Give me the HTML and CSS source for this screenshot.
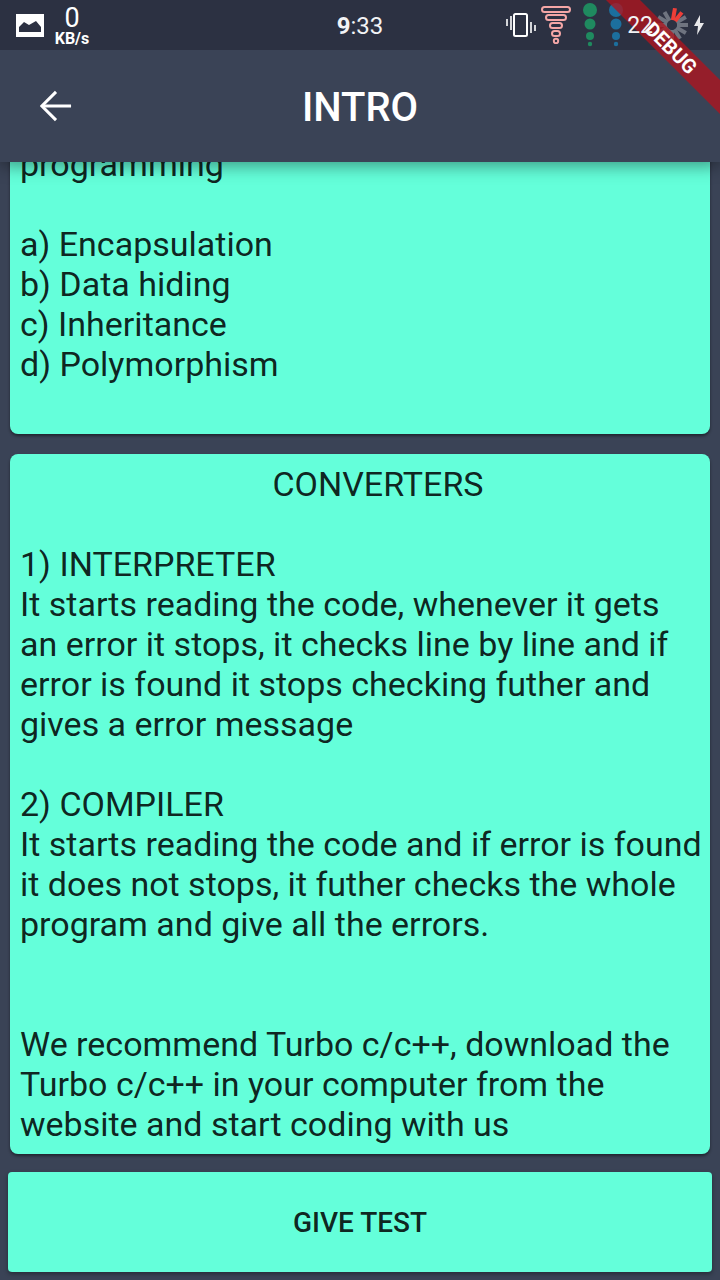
FILE: index.html
```html
<!DOCTYPE html>
<html lang="en">
<head>
    <meta charset="UTF-8">
    <title>Intro</title>
    <link rel="stylesheet" href="styles.css">
</head>
<body>
<div class="screen">
    <div class="status-bar">
        <div class="status-left">
            <svg class="icon-gallery" width="28" height="24" viewBox="0 0 28 24">
                <rect x="0" y="0" width="28" height="23" fill="#fff"/>
                <path d="M3 18 L3 13 L8 8 L13 11 L20 7 L25 13 L25 18 Z" fill="#2c3142"/>
            </svg>
            <div class="speed">
                <span class="speed-num">0</span>
                <span class="speed-unit">KB/s</span>
            </div>
        </div>
        <div class="status-time"><b class="time-hour">9</b>:33</div>
        <div class="status-right">
            <svg class="icon-vibrate" width="30" height="24" viewBox="0 0 30 24" fill="none" stroke="#fff">
                <rect x="8" y="1" width="13" height="22" rx="1.5" stroke-width="2"/>
                <path d="M1 6 V13 M5 3 V17 M25 9 V20 M29 12 V18" stroke-width="2" opacity="0.8"/>
            </svg>
            <svg class="icon-tornado" width="30" height="38" viewBox="0 0 30 38" fill="none" stroke="#f4a6a6" stroke-width="2">
                <rect x="1" y="1" width="28" height="5" rx="2.5"/>
                <rect x="5" y="9" width="20" height="5" rx="2.5"/>
                <rect x="9" y="17" width="12" height="5" rx="2.5"/>
                <rect x="11" y="25" width="8" height="5" rx="2.5"/>
                <circle cx="15" cy="35" r="2.2"/>
            </svg>
            <svg class="icon-dots-green" width="16" height="44" viewBox="0 0 16 44" fill="#1f8a5f">
                <circle cx="8" cy="7" r="7"/>
                <circle cx="8" cy="21" r="5.5"/>
                <circle cx="8" cy="33" r="4"/>
                <circle cx="8" cy="41" r="2.2"/>
            </svg>
            <svg class="icon-dots-blue" width="16" height="44" viewBox="0 0 16 44" fill="#1c6f9e">
                <circle cx="8" cy="7" r="7"/>
                <circle cx="8" cy="21" r="5.5"/>
                <circle cx="8" cy="33" r="4"/>
                <circle cx="8" cy="41" r="2.2"/>
            </svg>
            <span class="battery-num">22</span>
            <svg class="icon-battery" width="34" height="34" viewBox="0 0 34 34" stroke-width="4">
                <g stroke="#6f7480">
                    <path d="M17 12 V2" transform="rotate(-30 17 17)"/>
                    <path d="M17 12 V1" transform="rotate(-60 17 17)"/>
                    <path d="M17 12 V1" transform="rotate(-90 17 17)"/>
                    <path d="M17 12 V1" transform="rotate(-120 17 17)"/>
                    <path d="M17 12 V1" transform="rotate(-150 17 17)"/>
                    <path d="M17 12 V1" transform="rotate(180 17 17)"/>
                    <path d="M17 12 V1" transform="rotate(150 17 17)"/>
                    <path d="M17 12 V1" transform="rotate(120 17 17)"/>
                    <path d="M17 12 V1" transform="rotate(90 17 17)"/>
                    <path d="M17 12 V1" transform="rotate(60 17 17)"/>
                </g>
                <g stroke="#ee3e38">
                    <path d="M17 12 V0" transform="rotate(10 17 17)"/>
                    <path d="M17 12 V1" transform="rotate(38 17 17)"/>
                </g>
            </svg>
            <svg class="icon-bolt" width="10" height="20" viewBox="0 0 10 20">
                <path d="M6 0 L0 11 H4 L3 20 L10 8 H6 Z" fill="#e8e8ea"/>
            </svg>
        </div>
    </div>

    <div class="app-bar">
        <svg class="back-icon" width="32" height="32" viewBox="0 0 34 34" fill="none" stroke="#fff" stroke-width="3.2">
            <path d="M33 17 H3"/>
            <path d="M17 2 L2 17 L17 32"/>
        </svg>
        <h1 class="app-title">INTRO</h1>
    </div>

    <div class="list">
        <div class="card">
            <p class="card-text">programming

a) Encapsulation
b) Data hiding
c) Inheritance
d) Polymorphism
</p>
            <div class="blank-line"></div>
        </div>
        <div class="card">
            <p class="card-heading">CONVERTERS</p>
            <p class="card-text">
1) INTERPRETER
It starts reading the code, whenever it gets
an error it stops, it checks line by line and if
error is found it stops checking futher and
gives a error message

2) COMPILER
It starts reading the code and if error is found
it does not stops, it futher checks the whole
program and give all the errors.


We recommend Turbo c/c++, download the
Turbo c/c++ in your computer from the
website and start coding with us</p>
        </div>
    </div>

    <div class="test-row">
        <button type="button" class="test-btn">GIVE TEST</button>
    </div>

    <div class="debug-banner">DEBUG</div>
</div>
</body>
</html>
```

FILE: styles.css
```css
* {
    box-sizing: border-box;
}
html, body {
    margin: 0;
    padding: 0;
}
body {
    font-family: Roboto, "Liberation Sans", sans-serif;
    background-color: #3a4356;
}
.screen {
    position: relative;
    display: flex;
    flex-direction: column;
    width: 720px;
    height: 1280px;
    overflow: hidden;
    background-color: #3a4356;
}

/* status bar */
.status-bar {
    display: grid;
    grid-template-columns: 1fr auto 1fr;
    align-items: center;
    height: 50px;
    flex-shrink: 0;
    background-color: #2c3142;
    color: #fff;
}
.status-left {
    display: flex;
    align-items: center;
    gap: 9px;
    padding-left: 16px;
}
.icon-gallery {
    margin-top: 2px;
}
.speed {
    display: flex;
    flex-direction: column;
    align-items: center;
    width: 38px;
    margin-bottom: 1px;
}
.speed-num {
    font-size: 27px;
    line-height: 27px;
}
.speed-unit {
    font-size: 16px;
    line-height: 13px;
    font-weight: 700;
}
.status-time {
    margin-top: 2px;
    font-size: 24px;
    color: #f2f3f5;
}
.time-hour {
    font-weight: 700;
}
.status-right {
    display: flex;
    align-items: center;
    justify-content: flex-end;
    padding-right: 16px;
}
.icon-vibrate {
    margin-right: 5px;
}
.icon-tornado {
    margin-right: 11px;
}
.icon-dots-green {
    margin-right: 10px;
}
.icon-dots-blue {
    margin-right: 3px;
}
/* these two stay bright where the ribbon crosses them */
.battery-num, .icon-bolt {
    position: relative;
    z-index: 3;
}
.battery-num {
    font-size: 23px;
    color: #f2f3f5;
}
.icon-battery {
    margin-left: 2px;
}
.icon-bolt {
    margin-left: 5px;
}

/* app bar */
.app-bar {
    position: relative;
    z-index: 1;
    display: flex;
    align-items: center;
    justify-content: center;
    height: 112px;
    flex-shrink: 0;
    background-color: #3a4356;
    box-shadow: 0 4px 16px rgba(0, 0, 0, 0.4);
    clip-path: inset(0 0 -40px 0);
}
.back-icon {
    position: absolute;
    left: 40px;
    top: 40px;
}
.app-title {
    margin: 0;
    padding-top: 2px;
    font-size: 40px;
    font-weight: 500;
    color: #fff;
}

/* scrolled cards, pinned to the bottom so the first one runs under the bar */
.list {
    display: flex;
    flex-direction: column;
    justify-content: flex-end;
    gap: 20px;
    flex: 1;
    min-height: 0;
    overflow: hidden;
    padding: 0 10px 10px;
}
.card {
    flex-shrink: 0;
    padding: 10px;
    background-color: #64ffda;
    border-radius: 8px;
    box-shadow: 0 2px 3px rgba(0, 0, 0, 0.45);
}
.card-text, .card-heading {
    margin: 0;
    font-size: 34px;
    line-height: 40px;
    color: rgba(0, 0, 0, 0.87);
}
.card-text {
    white-space: pre;
}
.card-heading {
    padding-left: 36px;
    text-align: center;
}
.blank-line {
    height: 40px;
}

/* bottom button */
.test-row {
    flex-shrink: 0;
    padding: 8px 8px 8px;
}
.test-btn {
    display: block;
    width: 100%;
    height: 100px;
    border: none;
    border-radius: 4px;
    background-color: #64ffda;
    font-family: Roboto, "Liberation Sans", sans-serif;
    font-size: 28px;
    font-weight: 500;
    color: rgba(0, 0, 0, 0.87);
    box-shadow: 0 2px 4px rgba(0, 0, 0, 0.35);
}

/* debug ribbon over the corner */
.debug-banner {
    position: absolute;
    top: 36px;
    left: 571px;
    z-index: 2;
    width: 200px;
    height: 24px;
    transform: rotate(45deg);
    background-color: rgba(175, 20, 30, 0.78);
    color: #fff;
    font-size: 20px;
    font-weight: 700;
    line-height: 24px;
    text-align: center;
}
```
